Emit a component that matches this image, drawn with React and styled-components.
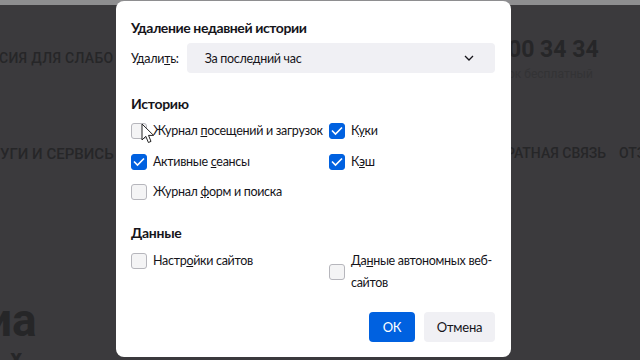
import React from "react";
import styled, { createGlobalStyle } from "styled-components";

const Global = createGlobalStyle`
  html, body { margin: 0; padding: 0; background: #3b3a3d; }
  body { font-family: "Lato", "Open Sans", sans-serif; }
  * { box-sizing: border-box; }
`;

const Page = styled.div`
  position: relative;
  width: 640px;
  height: 360px;
  overflow: hidden;
  background: #3b3a3d;
`;

const TopBand = styled.div`
  height: 5px;
  background: #8e8e90;
`;

const Site = styled.div`
  display: flex;
  flex-direction: column;
  color: #262628;
  font-family: "Roboto", "Liberation Sans", sans-serif;
`;

const HeaderRow = styled.div`
  display: flex;
  justify-content: space-between;
  padding-top: 31px;
  height: 140px;
`;

const AccessLink = styled.div`
  width: 114px;
  overflow: hidden;
  font-size: 14px;
  font-weight: 500;
  letter-spacing: 0.3px;
  margin-top: 14px;
  margin-left: -1px;
  white-space: nowrap;
`;

const Phone = styled.div`
  display: flex;
  flex-direction: column;
  width: 132px;
`;

const PhoneNum = styled.div`
  font-size: 23px;
  font-weight: 700;
  line-height: 28px;
  white-space: nowrap;
`;

const PhoneSub = styled.div`
  font-size: 12px;
  line-height: 16px;
  margin-top: 2px;
  color: #333335;
  white-space: nowrap;
`;

const NavRow = styled.div`
  display: flex;
  justify-content: space-between;
  font-size: 15px;
  font-weight: 500;
  white-space: nowrap;
`;

const NavLeft = styled.div`
  width: 114px;
  overflow: hidden;
`;

const NavRight = styled.div`
  display: flex;
  gap: 13px;
  width: 134px;
  overflow: hidden;
  font-size: 14px;
`;

const BigText = styled.div`
  margin-top: 135px;
  font-size: 46px;
  font-weight: 700;
  line-height: 44px;
  margin-left: -14px;
  white-space: nowrap;
`;

const SubBig = styled.div`
  font-size: 24px;
  font-weight: 700;
  line-height: 20px;
  margin-top: 6px;
  margin-left: 10px;
`;

const Dialog = styled.div`
  position: absolute;
  left: 116px;
  top: 1px;
  width: 395px;
  height: 356px;
  background: #fff;
  border-radius: 8px;
  padding: 17px 16px 15px 15px;
  display: flex;
  flex-direction: column;
  color: #15141a;
  font-family: "Lato", "Open Sans", sans-serif;
  font-size: 12.5px;
  letter-spacing: -0.3px;
`;

const Title = styled.div`
  font-size: 14px;
  font-weight: 700;
  line-height: 20px;
  letter-spacing: -0.4px;
`;

const SelectRow = styled.div`
  display: flex;
  align-items: center;
  gap: 8px;
  margin-top: 5px;
`;

const Label = styled.span`
  white-space: nowrap;
`;

const Select = styled.div`
  flex: 1;
  height: 30px;
  background: #f0f0f4;
  border-radius: 4px;
  display: flex;
  align-items: center;
  justify-content: space-between;
  padding: 0 21px 0 18px;
`;

const Heading = styled.div`
  font-size: 14px;
  font-weight: 700;
  line-height: 20px;
  letter-spacing: -0.3px;
  margin-top: ${(p) => p.$mt}px;
`;

const Grid = styled.div`
  display: grid;
  grid-template-columns: 198px 1fr;
  row-gap: ${(p) => p.$gap}px;
  align-items: start;
  margin-top: ${(p) => p.$mt}px;
`;

const Item = styled.label`
  position: relative;
  display: flex;
  align-items: center;
  gap: 6px;
  white-space: nowrap;
  line-height: ${(p) => p.$lh || 20}px;
`;

const Box = styled.span`
  flex: none;
  width: 16px;
  height: 16px;
  border-radius: 3px;
  display: flex;
  align-items: center;
  justify-content: center;
  background: ${(p) => (p.$on ? "#0061e0" : "#f4f4f5")};
  border: 1px solid ${(p) => (p.$on ? "#0061e0" : "#b6b6bc")};
`;

const Cursor = styled.svg`
  position: absolute;
  left: 10px;
  top: 2px;
`;

const Footer = styled.div`
  margin-top: auto;
  display: flex;
  justify-content: flex-end;
  gap: 9px;
`;

const Button = styled.button`
  height: 30px;
  min-width: ${(p) => p.$w}px;
  padding: 0 12px;
  border: none;
  border-radius: 4px;
  font-family: inherit;
  font-size: 13px;
  letter-spacing: -0.2px;
  background: ${(p) => (p.$primary ? "#0061e0" : "#f0f0f4")};
  color: ${(p) => (p.$primary ? "#fff" : "#15141a")};
`;

const Check = ({ on }) => (
  <Box $on={on}>
    {on && (
      <svg width="12" height="10" viewBox="0 0 12 10">
        <path d="M1 4.5 L4.5 8 L11 1.5" fill="none" stroke="#fff" strokeWidth="1.6" />
      </svg>
    )}
  </Box>
);

export default function App() {
  return (
    <Page>
      <Global />
      <TopBand />
      <Site>
        <HeaderRow>
          <AccessLink>СИЯ ДЛЯ СЛАБОВИДЯЩИХ</AccessLink>
          <Phone>
            <PhoneNum>00 34 34</PhoneNum>
            <PhoneSub>ок бесплатный</PhoneSub>
          </Phone>
        </HeaderRow>
        <NavRow>
          <NavLeft>УГИ И СЕРВИСЫ</NavLeft>
          <NavRight>
            <span>РАТНАЯ СВЯЗЬ</span>
            <span>ОТЗЫВЫ</span>
          </NavRight>
        </NavRow>
        <BigText>иа</BigText>
        <SubBig>х</SubBig>
      </Site>

      <Dialog>
        <Title>Удаление недавней истории</Title>
        <SelectRow>
          <Label>Удали<u>т</u>ь:</Label>
          <Select>
            <span>За последний час</span>
            <svg width="10" height="6" viewBox="0 0 10 6">
              <path d="M1 1 L5 5 L9 1" fill="none" stroke="#15141a" strokeWidth="1.3" />
            </svg>
          </Select>
        </SelectRow>

        <Heading $mt={21}>Историю</Heading>
        <Grid $gap={10.5} $mt={7}>
          <Item>
            <Check on={false} />
            <span>Журнал <u>п</u>осещений и загрузок</span>
            <Cursor width="14" height="22" viewBox="0 0 14 22">
              <path d="M1 1 L1 17 L4.8 13.3 L7.4 19.5 L10 18.4 L7.5 12.4 L12.6 12.4 Z" fill="#fff" stroke="#222" strokeWidth="1" strokeLinejoin="round" />
            </Cursor>
          </Item>
          <Item>
            <Check on />
            <span>К<u>у</u>ки</span>
          </Item>
          <Item>
            <Check on />
            <span>Активные <u>с</u>еансы</span>
          </Item>
          <Item>
            <Check on />
            <span>К<u>э</u>ш</span>
          </Item>
          <Item>
            <Check on={false} />
            <span>Журнал <u>ф</u>орм и поиска</span>
          </Item>
        </Grid>

        <Heading $mt={21}>Данные</Heading>
        <Grid $gap={0} $mt={7}>
          <Item $lh={22}>
            <Check on={false} />
            <span>Настр<u>о</u>йки сайтов</span>
          </Item>
          <Item $lh={22}>
            <Check on={false} />
            <span>Да<u>н</u>ные автономных веб-<br />сайтов</span>
          </Item>
        </Grid>

        <Footer>
          <Button $primary $w={46}>ОК</Button>
          <Button $w={71}>Отмена</Button>
        </Footer>
      </Dialog>
    </Page>
  );
}
